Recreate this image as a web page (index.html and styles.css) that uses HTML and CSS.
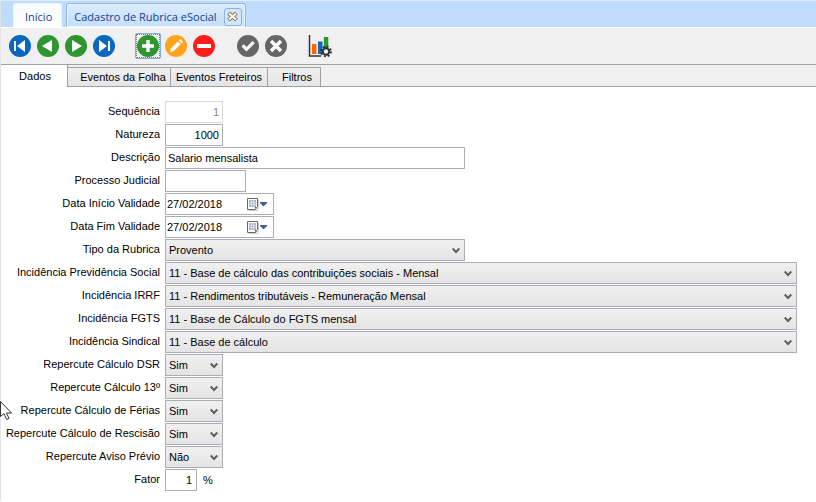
FILE: index.html
```html
<!doctype html>
<html lang="pt-BR">
  <head>
    <meta charset="UTF-8" />
    <meta name="viewport" content="width=device-width, initial-scale=1.0" />
    <title>Cadastro de Rubrica eSocial</title>
    <link rel="stylesheet" href="styles.css">
  </head>
  <body>
    <nav class="windows">
      <a class="window-tab window-tab--home" href="#home">Início</a>
      <div class="window-tab window-tab--current">
        <a href="#rubrica">Cadastro de Rubrica eSocial</a>
        <button class="close" type="button" aria-label="Fechar">
          <svg width="11" height="11" viewBox="0 0 11 11">
            <path d="M1.500 2l8 7M9.500 2l-8 7" stroke="#8a7a52" stroke-width="4" />
            <path d="M2 2.500l7 6M9 2.500l-7 6" stroke="#fff" stroke-width="2" />
          </svg>
        </button>
      </div>
    </nav>

    <div class="toolbar">
      <div class="group">
        <button class="tool tool--blue" type="button" aria-label="Primeiro">
          <svg viewBox="0 0 22 22"><path d="M5 6h2v10H5zM16 5v12l-8-6z" /></svg>
        </button>
        <button class="tool tool--green" type="button" aria-label="Anterior">
          <svg viewBox="0 0 22 22"><path d="M15 5v12l-10-6z" /></svg>
        </button>
        <button class="tool tool--green" type="button" aria-label="Próximo">
          <svg viewBox="0 0 22 22"><path d="M7 5v12l10-6z" /></svg>
        </button>
        <button class="tool tool--blue" type="button" aria-label="Último">
          <svg viewBox="0 0 22 22"><path d="M15 6h2v10h-2zM6 5v12l8-6z" /></svg>
        </button>
      </div>
      <div class="group">
        <button class="tool tool--green tool--focus" type="button" aria-label="Incluir">
          <svg viewBox="0 0 22 22"><path d="M9.300 5h3.400v4.300H17v3.400h-4.300V17H9.300v-4.300H5V9.300h4.300z" /></svg>
        </button>
        <button class="tool tool--orange" type="button" aria-label="Editar">
          <svg viewBox="0 0 22 22"><path d="M5 17l.8-3.600 7-7 2.800 2.800-7 7zM13.600 5.600l1-1q.7-.6 1.400 0l1.400 1.400q.6.7 0 1.400l-1 1z" /></svg>
        </button>
        <button class="tool tool--red" type="button" aria-label="Excluir">
          <svg viewBox="0 0 22 22"><path d="M4 9h14v4H4z" /></svg>
        </button>
      </div>
      <div class="group">
        <button class="tool tool--gray" type="button" aria-label="Confirmar">
          <svg viewBox="0 0 22 22"><path d="M4.500 11.500l2.300-2.300 2.700 2.700L15.500 6l2.300 2.300-8.300 8.200z" /></svg>
        </button>
        <button class="tool tool--gray" type="button" aria-label="Cancelar">
          <svg viewBox="0 0 22 22"><path d="M7.200 4.800L11 8.600l3.800-3.800 2.400 2.400-3.800 3.800 3.800 3.800-2.400 2.400-3.800-3.800-3.800 3.800-2.400-2.400L8.600 11 4.800 7.200z" /></svg>
        </button>
      </div>
      <div class="group">
        <button class="tool tool--chart" type="button" aria-label="Relatórios">
          <svg viewBox="0 0 24 22">
            <path d="M1.500 0v21H13" fill="none" stroke="#333" stroke-width="1.500" />
            <path d="M4 9h4.500v10H4z" fill="#f60" />
            <path d="M10 6.500h4.500V19H10z" fill="#0b68bf" />
            <path d="M15.800 2h4.500v11h-4.500z" fill="#2f962f" />
            <circle cx="18" cy="16.500" r="4.900" fill="none" stroke="#333" stroke-width="2" stroke-dasharray="1.900 1.950" />
            <circle cx="18" cy="16.500" r="3.200" fill="#f0f0f0" stroke="#333" stroke-width="2" />
          </svg>
        </button>
      </div>
    </div>

    <div class="tabs" role="tablist">
      <button class="tab tab--active" type="button" role="tab" aria-selected="true">Dados</button>
      <button class="tab tab--folha" type="button" role="tab">Eventos da Folha</button>
      <button class="tab tab--freteiros" type="button" role="tab">Eventos Freteiros</button>
      <button class="tab tab--filtros" type="button" role="tab">Filtros</button>
    </div>

    <form class="form">
      <div class="row">
        <label for="sequencia">Sequência</label>
        <input id="sequencia" class="field field--number" type="text" value="1" disabled />
      </div>
      <div class="row">
        <label for="natureza">Natureza</label>
        <input id="natureza" class="field field--number" type="text" value="1000" />
      </div>
      <div class="row">
        <label for="descricao">Descrição</label>
        <input id="descricao" class="field field--text" type="text" value="Salario mensalista" />
      </div>
      <div class="row">
        <label for="processo">Processo Judicial</label>
        <input id="processo" class="field field--process" type="text" />
      </div>
      <div class="row">
        <label for="inicio">Data Início Validade</label>
        <div class="date">
          <input id="inicio" type="text" value="27/02/2018" />
          <button type="button" aria-label="Abrir calendário">
            <svg width="22" height="14" viewBox="0 0 22 14">
              <path d="M2.500 13.500h9v-2h1v-9" fill="none" stroke="#ccc" />
              <path d="M1.500 1.500h10v8l-2 3h-8z" fill="#fff" stroke="#6f6668" />
              <path d="M3 3h7v7H3z" fill="#a9b6c8" />
              <path d="M3 5.500h7M3 7.500h7M5.500 3v7M7.500 3v7" stroke="#dfe6ee" stroke-width=".7" />
              <path d="M9 12v-2h2z" fill="#555" />
              <path d="M14 5h7v1l-3 3h-1l-3-3z" fill="#456087" />
            </svg>
          </button>
        </div>
      </div>
      <div class="row">
        <label for="fim">Data Fim Validade</label>
        <div class="date">
          <input id="fim" type="text" value="27/02/2018" />
          <button type="button" aria-label="Abrir calendário">
            <svg width="22" height="14" viewBox="0 0 22 14">
              <path d="M2.500 13.500h9v-2h1v-9" fill="none" stroke="#ccc" />
              <path d="M1.500 1.500h10v8l-2 3h-8z" fill="#fff" stroke="#6f6668" />
              <path d="M3 3h7v7H3z" fill="#a9b6c8" />
              <path d="M3 5.500h7M3 7.500h7M5.500 3v7M7.500 3v7" stroke="#dfe6ee" stroke-width=".7" />
              <path d="M9 12v-2h2z" fill="#555" />
              <path d="M14 5h7v1l-3 3h-1l-3-3z" fill="#456087" />
            </svg>
          </button>
        </div>
      </div>
      <div class="row">
        <label for="tipo">Tipo da Rubrica</label>
        <select id="tipo" class="select select--medium"><option>Provento</option></select>
      </div>
      <div class="row">
        <label for="previdencia">Incidência Previdência Social</label>
        <select id="previdencia" class="select"><option>11 - Base de cálculo das contribuições sociais - Mensal</option></select>
      </div>
      <div class="row">
        <label for="irrf">Incidência IRRF</label>
        <select id="irrf" class="select"><option>11 - Rendimentos tributáveis - Remuneração Mensal</option></select>
      </div>
      <div class="row">
        <label for="fgts">Incidência FGTS</label>
        <select id="fgts" class="select"><option>11 - Base de Cálculo do FGTS mensal</option></select>
      </div>
      <div class="row">
        <label for="sindical">Incidência Sindical</label>
        <select id="sindical" class="select"><option>11 - Base de cálculo</option></select>
      </div>
      <div class="row">
        <label for="dsr">Repercute Cálculo DSR</label>
        <select id="dsr" class="select select--small"><option>Sim</option><option>Não</option></select>
      </div>
      <div class="row">
        <label for="decimo">Repercute Cálculo 13º</label>
        <select id="decimo" class="select select--small"><option>Sim</option><option>Não</option></select>
      </div>
      <div class="row">
        <label for="ferias">Repercute Cálculo de Férias</label>
        <select id="ferias" class="select select--small"><option>Sim</option><option>Não</option></select>
      </div>
      <div class="row">
        <label for="rescisao">Repercute Cálculo de Rescisão</label>
        <select id="rescisao" class="select select--small"><option>Sim</option><option>Não</option></select>
      </div>
      <div class="row">
        <label for="aviso">Repercute Aviso Prévio</label>
        <select id="aviso" class="select select--small"><option>Não</option><option>Sim</option></select>
      </div>
      <div class="row">
        <label for="fator">Fator</label>
        <div class="percent">
          <input id="fator" class="field field--factor" type="text" value="1" />
          <span>%</span>
        </div>
      </div>
    </form>

    <svg class="pointer" width="13" height="20" viewBox="0 0 13 20">
      <path d="M.5.500v15l3.500-3 2.500 6 2.500-1-2.500-5.500h5z" fill="#fff" stroke="#333" />
    </svg>
  </body>
</html>
```

FILE: styles.css
```css
:root {
  --border: #abadb3;
  --line: #a0a0a0;
  --bar: #f0f0f0;
  --blue: #0b68bf;
  --green: #2f962f;
}

* {
  box-sizing: border-box;
}

body {
  margin: 0;
  border-left: 1px solid #e3e3e3;
  font: 11px/13px "Liberation Sans", Arial, sans-serif;
  color: #000;
  background: #fff;
}

button,
input,
select {
  margin: 0;
  padding: 0;
  font: inherit;
  color: inherit;
}

button {
  border: 0;
  background: none;
}

svg {
  display: block;
}

/* open windows */
.windows {
  display: flex;
  align-items: flex-end;
  gap: 4px;
  height: 28px;
  padding-left: 12px;
  border-top: 1px solid #dcebfd;
  border-bottom: 1px solid #fff;
  background: #bfdcff;
  font: 11px/16px "Open Sans", sans-serif;
}

.window-tab {
  display: flex;
  align-items: center;
  height: 24px;
  border: 1px solid #e4f8ff;
  border-bottom: 0;
  border-radius: 3px 3px 0 0;
  color: #15428b;
  text-decoration: none;
  white-space: nowrap;
}

.window-tab a {
  color: inherit;
  text-decoration: none;
}

.window-tab--home {
  padding: 2px 9px 0 11px;
  background: linear-gradient(#f6fbff, #fff);
}

.window-tab--current {
  gap: 7px;
  padding: 2px 3px 0 7px;
  border-color: #8fb9e3;
  background: linear-gradient(#dbebfc, #c4defb);
  box-shadow: inset 0 0 0 1px #e4f8ff;
}

.close {
  display: grid;
  place-items: center;
  width: 18px;
  height: 18px;
  border: 1px solid #8db2e3;
  border-radius: 3px;
  background: #d5e5f8;
}

/* toolbar */
.toolbar {
  display: flex;
  align-items: center;
  gap: 16px;
  height: 37px;
  padding-left: 5px;
  border-bottom: 1px solid var(--line);
  background: var(--bar);
}

.group {
  display: flex;
}

.tool {
  display: grid;
  place-items: center;
  width: 28px;
  height: 26px;
}

.tool svg {
  width: 22px;
  height: 22px;
  border-radius: 50%;
  fill: #fff;
}

.tool--blue svg {
  background: var(--blue);
}

.tool--green svg {
  background: var(--green);
}

.tool--orange svg {
  background: #fea31d;
}

.tool--red svg {
  background: #fe1d1b;
}

.tool--gray svg {
  background: #666;
}

.tool--focus {
  width: 26px;
  margin: 0 1px;
  border: 1px solid #84acdd;
  border-radius: 2px;
  outline: 1px dotted #777;
  outline-offset: -2px;
}

.tool--chart svg {
  width: 24px;
  border-radius: 0;
}

/* tabs */
.tabs {
  display: flex;
  align-items: flex-end;
  height: 22px;
  background: linear-gradient(var(--line), var(--line)) bottom / 100% 1px no-repeat var(--bar);
}

.tab {
  height: 20px;
  border: 1px solid var(--line);
  border-left: 0;
  background: linear-gradient(#f0f0f0, #e5e5e5);
  white-space: nowrap;
}

.tab--active {
  width: 67px;
  height: 22px;
  padding-left: 2px;
  border-width: 0 1px 0 0;
  background: #fff;
}

.tab--folha {
  width: 103px;
  padding-left: 8px;
}

.tab--freteiros {
  width: 97px;
}

.tab--filtros {
  width: 53px;
  padding-left: 6px;
}

/* form */
.form {
  display: grid;
  gap: 1px;
  padding: 14px 19px 10px 0;
}

.row {
  display: grid;
  grid-template-columns: 159px 1fr;
  column-gap: 5px;
}

.row label {
  padding-top: 4px;
  text-align: right;
  white-space: nowrap;
}

.field,
.date,
.select {
  height: 22px;
  border: 1px solid var(--border);
  border-radius: 0;
  background: #fff;
}

.field {
  padding: 0 2px;
}

.field--number {
  width: 58px;
  padding-right: 3px;
  text-align: right;
}

.field--number:disabled {
  border-color: #d9d9d9;
  color: #838383;
}

.field--text {
  width: 300px;
}

.field--process {
  width: 81px;
}

.field--factor {
  width: 32px;
  padding-right: 4px;
  text-align: right;
}

.date {
  display: flex;
  align-items: center;
  justify-content: space-between;
  width: 109px;
  padding: 0 5px 0 1px;
}

.date input {
  width: 70px;
  border: 0;
  background: none;
}

.select {
  appearance: none;
  width: 100%;
  padding: 0 20px 0 3px;
  background:
    url("data:image/svg+xml,%3Csvg xmlns='http://www.w3.org/2000/svg' width='8' height='7'%3E%3Cpath d='M.7 1.500l3.300 3.500 3.300-3.500' fill='none' stroke='%23606060' stroke-width='2'/%3E%3C/svg%3E") right 4px center no-repeat,
    linear-gradient(#f0f0f0, #e4e4e4);
}

.select--medium {
  width: 300px;
}

.select--small {
  width: 58px;
}

.percent {
  display: flex;
  align-items: center;
  gap: 6px;
}

/* mouse pointer lies over the page */
.pointer {
  position: absolute;
  top: 401px;
  left: 0;
}
```
